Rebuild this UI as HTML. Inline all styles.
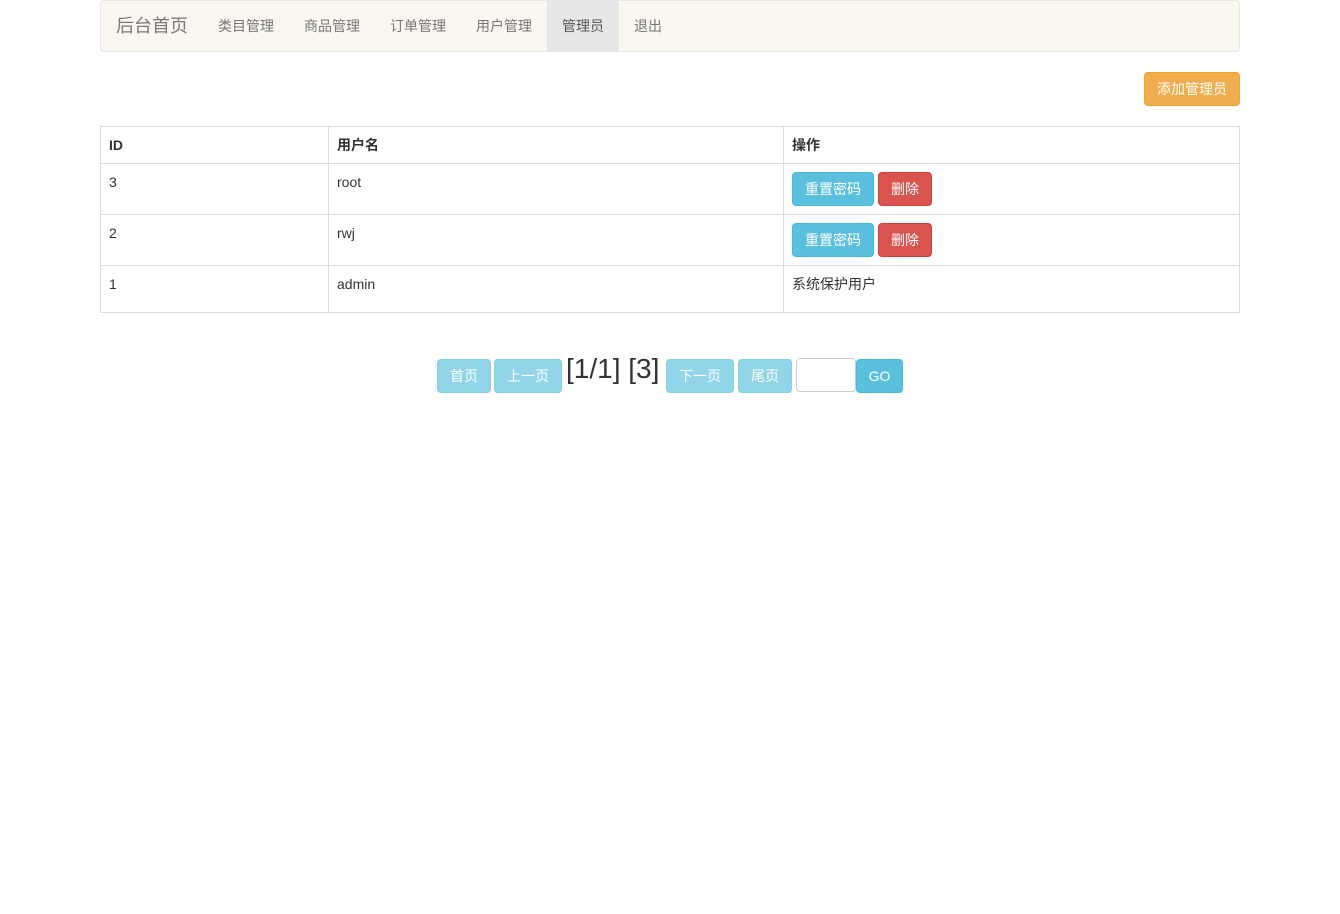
<!DOCTYPE html>
<html><head><meta charset="utf-8"><style>
*{box-sizing:border-box}
body{margin:0;font-family:"Liberation Sans","Noto Sans CJK SC",sans-serif;font-size:14px;color:#333;background:#fff;width:1340px;height:914px;overflow:hidden}
.nav{position:absolute;left:100px;top:0;width:1140px;height:52px;background:#f9f7ef;border:1px solid #e7e7e7;border-radius:4px}
.nav span{position:absolute;top:0;height:50px;line-height:50px;color:#777}
.brand{font-size:18px}
.act{background:#e7e7e7;color:#555!important}
.btn{position:absolute;color:#fff;font-size:14px;border-radius:4px;text-align:center;border:1px solid}
.info{background:#5bc0de;border-color:#46b8da}
.dang{background:#d9534f;border-color:#d43f3a}
.lt{background:#92d4e8;border-color:#88cfe5}
table{position:absolute;left:100px;top:126px;width:1140px;border-collapse:collapse}
td,th{border:1px solid #ddd;padding:8px;text-align:left;vertical-align:top;line-height:20px}
th{font-weight:bold;height:37px}
</style></head><body>
<div class="nav">
<span class="brand" style="left:15px">后台首页</span>
<span style="left:117px">类目管理</span>
<span style="left:203px">商品管理</span>
<span style="left:289px">订单管理</span>
<span style="left:375px">用户管理</span>
<span class="act" style="left:446px;width:72px;text-align:center">管理员</span>
<span style="left:533px">退出</span>
</div>
<div class="btn" style="left:1144px;top:72px;width:96px;height:34px;line-height:32px;background:#f0ad4e;border-color:#eea236">添加管理员</div>
<table>
<tr><th style="width:228px">ID</th><th style="width:455px">用户名</th><th>操作</th></tr>
<tr style="height:51px"><td>3</td><td>root</td><td></td></tr>
<tr style="height:51px"><td>2</td><td>rwj</td><td></td></tr>
<tr style="height:47px"><td>1</td><td>admin</td><td>系统保护用户</td></tr>
</table>
<div class="btn info" style="left:792px;top:172px;width:82px;height:34px;line-height:32px">重置密码</div>
<div class="btn dang" style="left:878px;top:172px;width:54px;height:34px;line-height:32px">删除</div>
<div class="btn info" style="left:792px;top:223px;width:82px;height:34px;line-height:32px">重置密码</div>
<div class="btn dang" style="left:878px;top:223px;width:54px;height:34px;line-height:32px">删除</div>
<div class="btn lt" style="left:437px;top:359px;width:54px;height:34px;line-height:32px">首页</div>
<div class="btn lt" style="left:494px;top:359px;width:68px;height:34px;line-height:32px">上一页</div>
<div style="position:absolute;left:566px;top:352px;font-size:28px;line-height:34px">[1/1] [3]</div>
<div class="btn lt" style="left:666px;top:359px;width:68px;height:34px;line-height:32px">下一页</div>
<div class="btn lt" style="left:738px;top:359px;width:54px;height:34px;line-height:32px">尾页</div>
<div style="position:absolute;left:796px;top:358px;width:60px;height:34px;border:1px solid #ccc;border-radius:4px"></div>
<div class="btn info" style="left:856px;top:359px;width:47px;height:34px;line-height:32px">GO</div>
</body></html>
